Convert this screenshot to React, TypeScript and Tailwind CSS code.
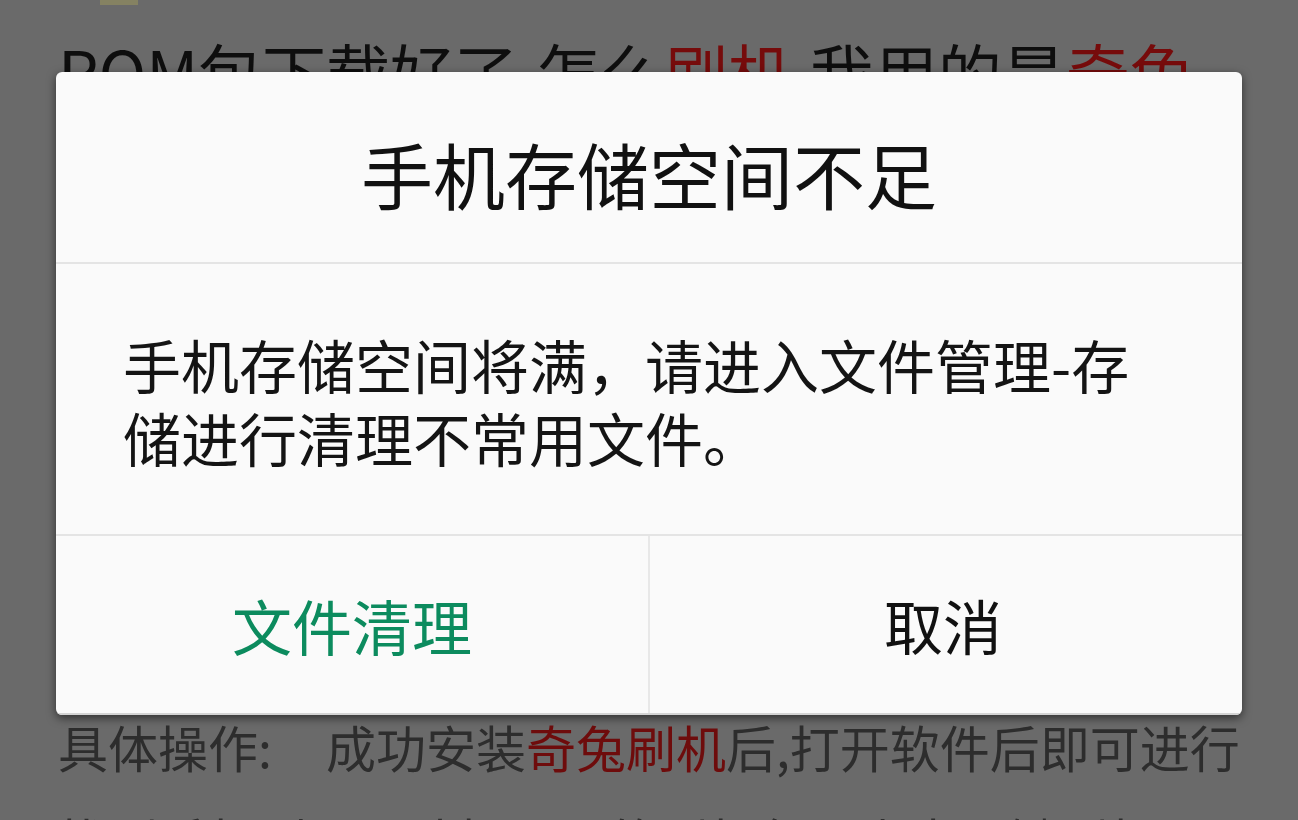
import React from 'react';

const cjk = "font-['Noto_Sans_CJK_SC','Noto_Sans',sans-serif]";

function StorageDialog() {
  return (
    <div className="absolute left-[56px] top-[72px] w-[1186px] h-[643px] flex flex-col rounded-[6px] bg-[#fafafa] shadow-[0_3px_10px_rgba(0,0,0,0.55)] overflow-hidden">
      <div className="h-[190px] flex items-center justify-center pt-[12px]">
        <h2 className="text-[72px] leading-none text-[#111111]">手机存储空间不足</h2>
      </div>
      <div className="h-[2px] bg-[#e4e4e4]" />
      <div className="h-[270px] px-[67px] pt-[64px]">
        <p className="text-[58px] leading-[73px] text-[#141414]">
          手机存储空间将满，请进入文件管理-存储进行清理不常用文件。
        </p>
      </div>
      <div className="h-[2px] bg-[#e4e4e4]" />
      <div className="h-[179px] flex border-b-2 border-[#d4d4d4]">
        <button className="flex-1 flex items-center justify-center text-[60px] leading-none text-[#0c8b5e]">
          文件清理
        </button>
        <div className="w-[2px] bg-[#e8e8e8]" />
        <button className="flex-1 flex items-center justify-center text-[59px] leading-none text-[#111111]">
          <span className="mr-[6px]">取消</span>
        </button>
      </div>
    </div>
  );
}

export default function App() {
  return (
    <div className={`relative w-[1298px] h-[820px] overflow-hidden bg-[#6a6a6a] ${cjk}`}>
      <div className="pl-[58px]">
        <div className="ml-[42px] w-[38px] h-[5px] bg-[#858262]" />
        <p className="mt-[33px] text-[64px] leading-none text-[#0e0e0e] whitespace-nowrap">
          ROM包下载好了,怎么<span className="text-[#760b0b]">刷机</span>,我用的是<span className="text-[#760b0b]">奇兔</span>
        </p>
        <p className="mt-[600px] text-[50px] leading-[89px] text-[#2d2d2d] whitespace-nowrap">
          具体操作:<span className="inline-block w-[54px]" />成功安装<span className="text-[#6e0c0c]">奇兔刷机</span>后,打开软件后即可进行
        </p>
        <p className="mt-[4px] text-[50px] leading-[89px] text-[#2d2d2d] whitespace-nowrap">
          找到手机型号，选择需要的刷机包，点击一键刷机即可
        </p>
      </div>
      <StorageDialog />
    </div>
  );
}
